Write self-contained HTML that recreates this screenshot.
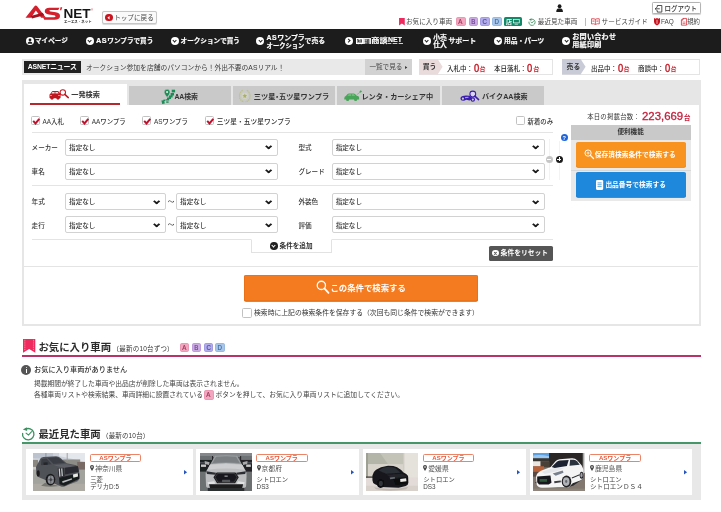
<!DOCTYPE html>
<html lang="ja">
<head>
<meta charset="utf-8">
<title>ASNET</title>
<style>
html,body{margin:0;padding:0;background:#fff;}
body{width:721px;height:512px;overflow:hidden;position:relative;font-family:"Liberation Sans","Noto Sans CJK JP",sans-serif;color:#333;}
#pg{will-change:transform;position:absolute;left:0;top:0;width:721px;height:512px;overflow:hidden;background:#fff;}
.a{position:absolute;}
.t{position:absolute;white-space:nowrap;line-height:10px;font-size:6.6px;color:#333;}
.b{font-weight:700;}
.w{color:#fff;}
svg{position:absolute;overflow:visible;}
/* nav */
#nav{left:0;top:28.5px;width:721px;height:24.5px;background:#1c1c1c;}
.nv{font-size:6.6px;font-weight:700;color:#fff;line-height:8px;-webkit-text-stroke:0.18px #fff;}
.ni{position:absolute;width:8px;height:8px;border-radius:50%;background:#fff;}
.ni:after{content:"";position:absolute;left:2.4px;top:1.9px;width:2.2px;height:2.2px;border-right:1.1px solid #1c1c1c;border-bottom:1.1px solid #1c1c1c;transform:rotate(45deg);}
.ni.r:after{left:1.9px;top:2.4px;transform:rotate(-45deg);}
/* selects */
.sel{position:absolute;height:17px;box-sizing:border-box;border:0.8px solid #d2d2d2;border-radius:2px;background:#fff;}
.sel span{position:absolute;left:2.7px;top:3.5px;font-size:6.6px;line-height:9px;color:#333;white-space:nowrap;font-weight:500;}
.sel i{position:absolute;right:5.7px;top:4.9px;width:3.3px;height:3.3px;border-right:2px solid #1a1a1a;border-bottom:2px solid #1a1a1a;transform:scaleY(0.8) rotate(45deg);}
.lb{font-size:6.6px;color:#333;font-weight:500;}
.hr{position:absolute;height:0.8px;background:#e4e4e4;}
/* checkbox */
.cb{position:absolute;width:9.1px;height:9.1px;box-sizing:border-box;border:0.8px solid #c2c2c2;border-radius:1.6px;background:#fff;}
.cb svg{left:0;top:0;}
.bd{position:absolute;width:9.4px;height:9.2px;border-radius:1.8px;font-size:7.2px;line-height:8.6px;text-align:center;box-sizing:border-box;}
.bd span{display:inline-block;transform:scaleX(0.85);-webkit-text-stroke:0.2px currentColor;}
.bA{background:#f3a6c0;color:#963452;border:0.5px solid #eb98b4;}
.bB{background:#cbaae2;color:#6c4290;border:0.5px solid #be9cda;}
.bC{background:#b2aceb;color:#504a9c;border:0.5px solid #a49ce2;}
.bD{background:#a8c6ea;color:#3c689c;border:0.5px solid #98bae0;}
</style>
</head>
<body>
<div id="pg">
<svg width="0" height="0" style="left:0;top:0"><defs><filter id="bl" x="-5%" y="-5%" width="110%" height="110%"><feGaussianBlur stdDeviation="0.35"/></filter></defs></svg>

<!-- ===== header ===== -->
<svg class="a" style="left:23px;top:4px" width="72" height="22" viewBox="0 0 72 22">
  <g transform="translate(-5 -4) scale(0.125)">
  <path d="M60 141 L132 49 Q142 37 153 49 L224 141 L186 141 L143 84 L104 141 Z" fill="#d3202c"/>
  <path d="M100 127 L198 102 L210 121 L112 147 Z" fill="#a5121d"/>
  <path d="M332 62 L252 62 Q214 62 214 90 Q214 111 246 115 L290 121 Q300 123 300 130 Q300 137 288 137 L200 137 L210 158 L292 158 Q336 158 336 128 Q336 103 302 98 L262 92 Q251 90 251 84 Q251 79 262 79 L322 79 Z" fill="#d3202c"/>
  <path d="M340 58 L354 58 L346 82 L336 82 Z" fill="#d3202c"/>
  </g>
  <text x="40.4" y="13.7" font-family="Liberation Sans,sans-serif" font-weight="700" font-size="12.4" fill="#161616" textLength="27.2" lengthAdjust="spacingAndGlyphs">NET</text>
  <text x="68" y="7" font-family="Liberation Sans,sans-serif" font-size="2.6" fill="#d3202c">®</text>
  <text x="41" y="19.2" font-family="Liberation Sans,Noto Sans CJK JP,sans-serif" font-weight="700" font-size="3.4" fill="#222" textLength="27.6" lengthAdjust="spacingAndGlyphs">エーエス・ネット</text>
</svg>

<div class="a" style="left:102.3px;top:11px;width:54.4px;height:12.8px;box-sizing:border-box;border:0.8px solid #c6c6c6;border-radius:2px;background:#fafafa;box-shadow:0 0.5px 0.8px rgba(0,0,0,.15)"></div>
<div class="a" style="left:105.2px;top:13.8px;width:7.4px;height:7.4px;border-radius:50%;background:#c8141e"></div>
<svg class="a" style="left:105.2px;top:13.8px" width="7.4" height="7.4" viewBox="0 0 10 10"><path d="M6.2 2.6 L3.2 5 L6.2 7.4 Z" fill="#fff"/></svg>
<div class="t" style="left:114.2px;top:12.6px;font-size:6.6px;color:#444">トップに戻る</div>

<!-- user icon -->
<svg class="a" style="left:556.3px;top:3.7px" width="7.2" height="8.2" viewBox="0 0 16 17" preserveAspectRatio="none"><circle cx="8" cy="4.6" r="4.2" fill="#1a1a1a"/><path d="M0.6 16.6 Q0.6 9.6 5.4 9.2 L10.6 9.2 Q15.4 9.6 15.4 16.6 Z" fill="#1a1a1a"/></svg>

<!-- logout -->
<div class="a" style="left:651.6px;top:2.4px;width:49px;height:11.6px;box-sizing:border-box;border:0.8px solid #b4b4b4;border-radius:1.5px;background:#fff;box-shadow:0 0.5px 0.8px rgba(0,0,0,.18)"></div>
<svg class="a" style="left:654px;top:4.5px" width="8.6" height="7.6" viewBox="0 0 16 15"><path d="M6 1 H15 V14 H6 V10.6 M6 4.4 V1" fill="none" stroke="#333" stroke-width="1.7"/><path d="M11 7.5 H2 M5 4.4 L1.8 7.5 L5 10.6" fill="none" stroke="#333" stroke-width="1.7"/></svg>
<div class="t" style="left:664.6px;top:3.6px;font-size:6.5px;font-weight:500;color:#333">ログアウト</div>

<!-- link row -->
<svg class="a" style="left:399.4px;top:18px" width="5.8" height="7.6" viewBox="0 0 12 16"><path d="M0 0 H12 V16 L6 11.5 L0 16 Z" fill="#ee2a5e"/></svg>
<div class="t" style="left:406px;top:17.4px;font-size:6.6px;color:#444">お気に入り車両</div>
<div class="bd bA" style="left:456.2px;top:16.8px"><span>A</span></div>
<div class="bd bB" style="left:468.6px;top:16.8px"><span>B</span></div>
<div class="bd bC" style="left:480.4px;top:16.8px"><span>C</span></div>
<div class="bd bD" style="left:492.4px;top:16.8px"><span>D</span></div>
<div class="a" style="left:504.2px;top:17.4px;width:17.8px;height:8.6px;border-radius:1.6px;background:#14896a"></div>
<div class="t w b" style="left:506px;top:16.8px;font-size:6px">店</div>
<svg class="a" style="left:513.4px;top:19px" width="6.6" height="5.6" viewBox="0 0 12 10"><rect x="0.6" y="0.6" width="10.8" height="6.4" fill="none" stroke="#fff" stroke-width="1.2"/><path d="M3 9.4 H9" stroke="#fff" stroke-width="1.2"/></svg>

<svg class="a" style="left:528.2px;top:17.6px" width="8" height="8" viewBox="0 0 8 8"><path d="M2.36 1.67 A3.1 3.1 0 1 1 0.97 3.66" fill="none" stroke="#3a9060" stroke-width="0.85"/><path d="M3.36 0.37 L0.86 1.77 L3.46 2.67 Z" fill="#3a9060"/><path d="M2.6 3.9 L4 5 L5.7 3" fill="none" stroke="#3a9060" stroke-width="0.8"/></svg>
<div class="t" style="left:537.8px;top:17.4px;font-size:6.6px;color:#444">最近見た車両</div>
<div class="a" style="left:584.6px;top:18px;width:0.7px;height:8.4px;background:#bbb"></div>
<svg class="a" style="left:591px;top:18.2px" width="8.8" height="7" viewBox="0 0 18 14"><path d="M9 2.4 Q5 0.2 1 1.4 V12 Q5 10.8 9 13 Q13 10.8 17 12 V1.4 Q13 0.2 9 2.4 Z M9 2.4 V13" fill="none" stroke="#d3202c" stroke-width="1.4"/><path d="M3 4.4 H7 M3 7 H7 M11 4.4 H15 M11 7 H15" stroke="#d3202c" stroke-width="1"/></svg>
<div class="t" style="left:601.6px;top:17.4px;font-size:6.6px;color:#444">サービスガイド</div>
<svg class="a" style="left:654px;top:18px" width="6" height="7.6" viewBox="0 0 12 15"><path d="M0 0 L3 1.6 L6 0 L9 1.6 L12 0 V8 Q12 12.6 6 15 Q0 12.6 0 8 Z" fill="#c8121e"/><path d="M6 3.4 V11.6" stroke="#fff" stroke-width="1.4"/></svg>
<div class="t" style="left:661px;top:17.4px;font-size:6.4px;color:#444">FAQ</div>
<svg class="a" style="left:681px;top:18px" width="6" height="7.6" viewBox="0 0 12 15"><path d="M4 0.8 H11.2 V14.2 H0.8 V4 Z M4 0.8 V4 H0.8" fill="none" stroke="#d3202c" stroke-width="1.5"/><path d="M3 8 H9 M3 11 H9" stroke="#d3202c" stroke-width="1.2"/></svg>
<div class="t" style="left:687.2px;top:17.4px;font-size:6.4px;color:#444">規約</div>

<!-- ===== nav ===== -->
<div id="nav" class="a"></div>

<svg class="a" style="left:26px;top:36.8px" width="8" height="8" viewBox="0 0 16 16"><circle cx="8" cy="8" r="8" fill="#fff"/><circle cx="8" cy="6" r="2.8" fill="#1c1c1c"/><path d="M3.2 13.4 Q3.4 9.6 6.4 9.4 L9.6 9.4 Q12.6 9.6 12.8 13.4 Z" fill="#1c1c1c"/></svg>
<div class="t nv" style="left:35px;top:36.8px">マイページ</div>
<div class="ni" style="left:86px;top:36.8px"></div>
<div class="t nv" style="left:96px;top:36.8px"><span style="letter-spacing:0.6px;font-size:7.3px">AS</span>ワンプラで買う</div>
<div class="ni" style="left:170.8px;top:36.8px"></div>
<div class="t nv" style="left:180.6px;top:36.8px">オークションで買う</div>
<div class="ni" style="left:256.3px;top:37.1px"></div>
<div class="t nv" style="left:266.6px;top:33.7px;line-height:8px;font-size:6.3px"><span style="font-size:6.95px"><span style="letter-spacing:0.5px">AS</span>ワンプラ</span><br>オークション</div>
<div class="t nv" style="left:304.6px;top:37.4px;font-size:6.9px">で売る</div>
<div class="ni r" style="left:345.2px;top:36.8px"></div>
<div class="a" style="left:356px;top:37.5px;width:7.3px;height:6.8px;box-sizing:border-box;border:0.75px solid #fff"></div>
<div class="t" style="left:357.1px;top:36px;font-size:5.1px;font-weight:700;color:#fff">店</div>
<div class="a" style="left:363.3px;top:37.5px;width:7.3px;height:6.8px;background:#e8e8e8"></div>
<div class="t" style="left:364.4px;top:36px;font-size:5.1px;font-weight:700;color:#1c1c1c">頭</div>
<div class="t nv" style="left:371.2px;top:36.9px;font-size:8.2px;transform:scaleY(0.8);transform-origin:0 50%">商談</div>
<div class="t nv" style="left:388px;top:36.2px;font-size:6.9px;letter-spacing:0.1px">NET</div>
<div class="a" style="left:388.2px;top:43.3px;width:15.2px;height:0.9px;background:repeating-linear-gradient(90deg,#cfcfcf 0 0.7px,#555 0.7px 1.2px)"></div>
<div class="ni" style="left:423px;top:36.8px"></div>
<div class="t nv" style="left:433.2px;top:33.6px;line-height:7.5px;font-size:6.8px">小売<br>仕入</div>
<div class="t nv" style="left:448.4px;top:36.6px;font-size:6.95px">サポート</div>
<div class="ni" style="left:494.2px;top:36.8px"></div>
<div class="t nv" style="left:504px;top:36.8px;font-size:6.75px">用品・パーツ</div>
<div class="ni" style="left:562.2px;top:36.8px"></div>
<div class="t nv" style="left:572.2px;top:33.2px;line-height:8.2px;font-size:7.05px;letter-spacing:0.3px">お問い合わせ<br>用紙印刷</div>



<!-- ===== news bar ===== -->
<div class="a" style="left:22px;top:59.2px;width:390px;height:15.6px;background:#e9e9e9"></div>
<div class="a" style="left:24.2px;top:61.2px;width:57px;height:11.4px;background:#222"></div>
<div class="t w b" style="left:27.8px;top:62.2px;font-size:6.9px;letter-spacing:-0.2px">ASNETニュース</div>
<div class="t" style="left:86px;top:63px;font-size:6.78px;color:#3a3a3a">オークション参加を店舗のパソコンから！外出不要のASリアル！</div>
<div class="a" style="left:365.4px;top:59.2px;width:46.6px;height:15.6px;background:#d2d2d2"></div>
<div class="t" style="left:369.4px;top:62.2px;font-size:6.6px;color:#444">一覧で見る</div>
<svg class="a" style="left:405px;top:65.6px" width="2.4" height="3" viewBox="0 0 6 8"><path d="M0 0 L6 4 L0 8 Z" fill="#333"/></svg>

<div class="a" style="left:418.6px;top:59.2px;width:134px;height:15.6px;box-sizing:border-box;border:0.8px solid #e4e4e4;background:#fff"></div>
<svg class="a" style="left:418.6px;top:59.2px" width="24" height="15.6" viewBox="0 0 24 15.6"><path d="M0 0 H18.6 L23.6 7.8 L18.6 15.6 H0 Z" fill="#e9dadc"/></svg>
<div class="t b" style="left:422.8px;top:62px;font-size:6.8px;color:#333">買う</div>
<div class="t" style="left:447px;top:63.6px;font-size:6.5px;font-weight:500;color:#222">入札中：</div>
<div class="t" style="left:473.6px;top:61.7px;font-size:11.2px;color:#c8202c;line-height:12px;transform:scaleX(0.84);transform-origin:0 0;-webkit-text-stroke:0.45px #c8202c">0</div>
<div class="t" style="left:479.4px;top:63.9px;font-size:6px;font-weight:700;color:#c8202c">台</div>
<div class="t" style="left:494px;top:63.6px;font-size:6.5px;font-weight:500;color:#222">本日落札：</div>
<div class="t" style="left:527.4px;top:61.7px;font-size:11.2px;color:#c8202c;line-height:12px;transform:scaleX(0.84);transform-origin:0 0;-webkit-text-stroke:0.45px #c8202c">0</div>
<div class="t" style="left:533.2px;top:63.9px;font-size:6px;font-weight:700;color:#c8202c">台</div>

<div class="a" style="left:562.2px;top:59.2px;width:138.2px;height:15.6px;box-sizing:border-box;border:0.8px solid #e4e4e4;background:#fff"></div>
<svg class="a" style="left:562.2px;top:59.2px" width="24" height="15.6" viewBox="0 0 24 15.6"><path d="M0 0 H18.6 L23.6 7.8 L18.6 15.6 H0 Z" fill="#c9ccd6"/></svg>
<div class="t b" style="left:566.6px;top:62px;font-size:6.8px;color:#333">売る</div>
<div class="t" style="left:591px;top:63.6px;font-size:6.5px;font-weight:500;color:#222">出品中：</div>
<div class="t" style="left:617.6px;top:61.7px;font-size:11.2px;color:#c8202c;line-height:12px;transform:scaleX(0.84);transform-origin:0 0;-webkit-text-stroke:0.45px #c8202c">0</div>
<div class="t" style="left:623.4px;top:63.9px;font-size:6px;font-weight:700;color:#c8202c">台</div>
<div class="t" style="left:638px;top:63.6px;font-size:6.5px;font-weight:500;color:#222">商談中：</div>
<div class="t" style="left:664.6px;top:61.7px;font-size:11.2px;color:#c8202c;line-height:12px;transform:scaleX(0.84);transform-origin:0 0;-webkit-text-stroke:0.45px #c8202c">0</div>
<div class="t" style="left:670.4px;top:63.9px;font-size:6px;font-weight:700;color:#c8202c">台</div>


<!-- ===== tabs ===== -->
<div class="a" style="left:21.8px;top:80.1px;width:679px;height:24.9px;background:#e6e6e6"></div>
<div class="a" style="left:24.2px;top:83.5px;width:103.2px;height:22px;background:#fff"></div>
<div class="a" style="left:30.4px;top:102.9px;width:89.6px;height:2px;background:#b4282e"></div>
<div class="a" style="left:129.2px;top:86.4px;width:101.6px;height:18.2px;background:#c9c9c9"></div>
<div class="a" style="left:233px;top:86.4px;width:102px;height:18.2px;background:#c9c9c9"></div>
<div class="a" style="left:337.2px;top:86.4px;width:102.4px;height:18.2px;background:#c9c9c9"></div>
<div class="a" style="left:442.4px;top:86.4px;width:102px;height:18.2px;background:#c9c9c9"></div>

<!-- tab1 icon: red car + magnifier -->
<svg class="a" style="left:49px;top:89px" width="21" height="12" viewBox="0 0 21 12">
  <path d="M0.5 8.6 V6.2 Q0.5 5 1.6 4.6 L2.6 2.9 Q3 2.1 4 2.1 H8.6 Q9.5 2.1 10 2.9 L11 4.6 Q11.6 5 11.6 6.2 V8.6 Q11.6 9.2 11 9.2 H1.1 Q0.5 9.2 0.5 8.6 Z" fill="#c0161e"/>
  <path d="M3.3 3.1 H5.6 V4.6 H2.5 Z M6.4 3.1 H8.8 L9.6 4.6 H6.4 Z" fill="#fff" opacity=".85"/>
  <circle cx="3" cy="9.2" r="1.45" fill="#c0161e"/><circle cx="9" cy="9.2" r="1.45" fill="#c0161e"/>
  <rect x="1.2" y="6" width="1.6" height="0.9" fill="#fff" opacity=".7"/><rect x="9.2" y="6" width="1.6" height="0.9" fill="#fff" opacity=".7"/>
  <circle cx="13.8" cy="3.4" r="2.7" fill="#fff" stroke="#c0161e" stroke-width="1.05"/>
  <path d="M15.8 5.4 L19.3 8.6" stroke="#c0161e" stroke-width="1.5" stroke-linecap="round"/>
</svg>
<div class="t b" style="left:71.2px;top:90px;font-size:7.2px;color:#333">一発検索</div>

<!-- tab2 icon: green map -->
<svg class="a" style="left:161px;top:89px" width="15" height="15.4" viewBox="0 0 15 15.4">
  <path d="M10.7 0.7 H14.1 V3.4 H10.7 Z" fill="#1a8c56"/>
  <path d="M9.6 4 H13 V6.6 H11.6 V8.4 H10 V10 H8.2 V11.6 H4.6 V10.2 H6 V8.4 H7.8 V6.4 H9.6 Z" fill="#1a8c56"/>
  <path d="M2.4 10.6 H4.2 V12 H2.4 Z" fill="#1a8c56"/>
  <path d="M0.4 11.6 L3.2 11.2 L3.8 14.6 L1.2 15 Z" fill="#1a8c56"/>
  <path d="M5.2 12.4 H7.6 V13.8 H5.2 Z" fill="#1a8c56"/>
  <path d="M6.1 0.3 A2.9 2.9 0 0 1 9 3.2 Q9 5 6.1 8.4 Q3.2 5 3.2 3.2 A2.9 2.9 0 0 1 6.1 0.3 Z" fill="#1a8c56" stroke="#c9c9c9" stroke-width="0.5"/>
  <circle cx="6.1" cy="3.1" r="1.1" fill="#d8e8dc"/>
</svg>
<div class="t b" style="left:174.4px;top:91.8px;font-size:6.9px;color:#333;letter-spacing:-0.1px">AA検索</div>

<!-- tab3 icon: laurel + star -->
<svg class="a" style="left:238.2px;top:89.3px" width="13.6" height="13.6" viewBox="0 0 28 28">
  <path d="M9.6 2.6 Q1 8.6 4 19.6 Q6.6 25.4 12.6 26.2" fill="none" stroke="#bcc18c" stroke-width="2.6" stroke-dasharray="3 1.2"/>
  <path d="M18.4 2.6 Q27 8.6 24 19.6 Q21.4 25.4 15.4 26.2" fill="none" stroke="#bcc18c" stroke-width="2.6" stroke-dasharray="3 1.2"/>
  <circle cx="14" cy="14" r="6.4" fill="#d3d5c0"/>
  <path d="M14 9.4 L15.4 12.6 L18.8 12.9 L16.2 15.2 L17 18.6 L14 16.8 L11 18.6 L11.8 15.2 L9.2 12.9 L12.6 12.6 Z" fill="#a9b06c"/>
</svg>
<div class="t b" style="left:253.8px;top:91.6px;font-size:7.2px;color:#333">三ツ星<span style="margin:0 -1.8px">・</span>五ツ星ワンプラ</div>

<!-- tab4 icon: green car -->
<svg class="a" style="left:343.8px;top:89.6px" width="18" height="12" viewBox="0 0 18 12">
  <path d="M0.3 8.2 Q0.3 6.2 1.8 5.9 L3.6 4 Q4.1 3.5 5 3.5 H9.6 Q10.5 3.5 11 4 L12.8 5.7 L13.8 5.9 Q15.1 6.2 15.1 7.6 V9.4 H0.3 Z" fill="#48a458"/>
  <circle cx="3.6" cy="9.5" r="1.6" fill="#48a458"/><circle cx="11.6" cy="9.5" r="1.6" fill="#48a458"/>
  <path d="M4.8 4.3 H7 V5.7 H3.5 Z M7.8 4.3 H9.8 L11.2 5.7 H7.8 Z" fill="#8cc894" opacity=".8"/>
  <path d="M12.6 5 L16.4 1.8" stroke="#7cbc86" stroke-width="0.9"/>
  <path d="M16.8 0.2 L18 1.6 L16.6 2.8 L15.4 1.4 Z" fill="#48a458"/>
</svg>
<div class="t b" style="left:361.4px;top:91.6px;font-size:7.2px;color:#333">レンタ・カーシェア中</div>

<!-- tab5 icon: bike + magnifier -->
<svg class="a" style="left:460px;top:90px" width="20" height="12" viewBox="0 0 20 12">
  <path d="M0.4 9 Q0.2 6.6 2.6 6 L6 5.6 L9.6 5.8 L11.6 7 L11.8 9.4 L9.4 10.4 L6.4 9.8 L4 10.8 L1.6 10.6 Z" fill="#3a1cb0"/>
  <circle cx="2.9" cy="8.7" r="1.1" fill="#c9c9c9"/><path d="M5 7 L8.4 6.8 L8.6 7.8 L5.2 8.2 Z" fill="#c9c9c9" opacity=".8"/>
  <circle cx="12.8" cy="9.6" r="1.7" fill="none" stroke="#3a1cb0" stroke-width="1.1"/>
  <circle cx="12.8" cy="4" r="2.9" fill="#dcd6f2" stroke="#3a1cb0" stroke-width="1.05"/>
  <path d="M14.9 6.1 L18.6 9.6" stroke="#3a1cb0" stroke-width="1.5" stroke-linecap="round"/>
</svg>
<div class="t b" style="left:482px;top:91.6px;font-size:7.1px;color:#333">バイクAA検索</div>


<!-- ===== search panel ===== -->
<div class="a" style="left:21.8px;top:105px;width:679px;height:221.2px;box-sizing:border-box;border:2.3px solid #e6e6e6;border-top:none;background:transparent"></div>

<div class="cb on" style="left:31.3px;top:116.2px"><svg width="7.5" height="7.5" viewBox="0 0 7.5 7.5"><path d="M1.2 3.9 L3.5 6.4 L7.3 1.9" fill="none" stroke="#c0102c" stroke-width="2"/></svg></div><div class="t" style="left:42.6px;top:116.8px;font-size:6.4px;font-weight:500">AA入札</div>
<div class="cb on" style="left:79.9px;top:116.2px"><svg width="7.5" height="7.5" viewBox="0 0 7.5 7.5"><path d="M1.2 3.9 L3.5 6.4 L7.3 1.9" fill="none" stroke="#c0102c" stroke-width="2"/></svg></div><div class="t" style="left:91.8px;top:116.8px;font-size:6.4px;font-weight:500">AAワンプラ</div>
<div class="cb on" style="left:142.3px;top:116.2px"><svg width="7.5" height="7.5" viewBox="0 0 7.5 7.5"><path d="M1.2 3.9 L3.5 6.4 L7.3 1.9" fill="none" stroke="#c0102c" stroke-width="2"/></svg></div><div class="t" style="left:154px;top:116.8px;font-size:6.4px;font-weight:500">ASワンプラ</div>
<div class="cb on" style="left:205.1px;top:116.2px"><svg width="7.5" height="7.5" viewBox="0 0 7.5 7.5"><path d="M1.2 3.9 L3.5 6.4 L7.3 1.9" fill="none" stroke="#c0102c" stroke-width="2"/></svg></div><div class="t" style="left:216.8px;top:116.8px;font-size:6.75px;font-weight:500">三ツ星・五ツ星ワンプラ</div>
<div class="cb" style="left:516.3px;top:116.2px"></div><div class="t" style="left:527.6px;top:116.8px;font-size:6.4px;font-weight:500">新着のみ</div>

<div class="hr" style="left:31.6px;top:132.2px;width:521px"></div>

<div class="t lb" style="left:31.6px;top:142.9px">メーカー</div>
<div class="sel" style="left:65.4px;top:138.6px;width:212.4px"><span>指定なし</span><i></i></div>
<div class="t lb" style="left:298.4px;top:142.9px">型式</div>
<div class="sel" style="left:332px;top:138.6px;width:213.4px"><span>指定なし</span><i></i></div>

<div class="t lb" style="left:31.6px;top:167.2px">車名</div>
<div class="sel" style="left:65.4px;top:162.6px;width:212.4px"><span>指定なし</span><i></i></div>
<div class="t lb" style="left:298.4px;top:167.2px">グレード</div>
<div class="sel" style="left:332px;top:162.6px;width:213.4px"><span>指定なし</span><i></i></div>

<div class="hr" style="left:31.6px;top:185.4px;width:521px"></div>

<div class="t lb" style="left:31.6px;top:196.6px">年式</div>
<div class="sel" style="left:65.4px;top:192.7px;width:100.6px"><span>指定なし</span><i></i></div>
<div class="t" style="left:167.8px;top:196.6px;font-size:6.6px">～</div>
<div class="sel" style="left:176.4px;top:192.7px;width:101.4px"><span>指定なし</span><i></i></div>
<div class="t lb" style="left:298.4px;top:196.6px">外装色</div>
<div class="sel" style="left:332px;top:192.7px;width:213.4px"><span>指定なし</span><i></i></div>

<div class="t lb" style="left:31.6px;top:220.5px">走行</div>
<div class="sel" style="left:65.4px;top:216.2px;width:100.6px"><span>指定なし</span><i></i></div>
<div class="t" style="left:167.8px;top:220.2px;font-size:6.6px">～</div>
<div class="sel" style="left:176.4px;top:216.2px;width:101.4px"><span>指定なし</span><i></i></div>
<div class="t lb" style="left:298.4px;top:220.5px">評価</div>
<div class="sel" style="left:332px;top:216.2px;width:213.4px"><span>指定なし</span><i></i></div>

<div class="hr" style="left:31.6px;top:239px;width:521px"></div>
<div class="a" style="left:251.4px;top:239px;width:81px;height:14.4px;box-sizing:border-box;border:0.8px solid #e2e2e2;border-top:0.8px solid #fff;background:#fff"></div>
<div class="a" style="left:270px;top:242.3px;width:7.6px;height:7.6px;border-radius:50%;background:#222"></div>
<div class="a" style="left:272.4px;top:243.9px;width:2px;height:2px;border-right:1.1px solid #fff;border-bottom:1.1px solid #fff;transform:rotate(45deg)"></div>
<div class="t b" style="left:279.6px;top:241.2px;font-size:6.6px;color:#333">条件を追加</div>

<div class="a" style="left:488.8px;top:245.6px;width:64px;height:15px;border-radius:1.6px;background:#555"></div>
<div class="a" style="left:492.4px;top:249.6px;width:6.8px;height:6.8px;border-radius:50%;background:#fff"></div>
<svg class="a" style="left:492.4px;top:249.6px" width="6.8" height="6.8" viewBox="0 0 10 10"><path d="M3.2 3.2 L6.8 6.8 M6.8 3.2 L3.2 6.8" stroke="#555" stroke-width="1.5"/></svg>
<div class="t w b" style="left:500.6px;top:248.2px;font-size:6.8px">条件をリセット</div>

<div class="hr" style="left:24.2px;top:265.8px;width:674px"></div>

<div class="a" style="left:243.8px;top:274.6px;width:234.4px;height:26.4px;border-radius:2px;background:#f47b20;box-shadow:0 0.8px 0 #cc5c10, inset 0 0 0 0.6px #e26c14"></div>
<svg class="a" style="left:315.8px;top:279.8px" width="13.4" height="14" viewBox="0 0 24 25"><circle cx="9.6" cy="9.6" r="7.4" fill="none" stroke="#fff" stroke-width="2.3"/><path d="M15 15 L22.4 23" stroke="#fff" stroke-width="3.2" stroke-linecap="round"/></svg>
<div class="t w b" style="left:330.4px;top:283px;font-size:8.4px;line-height:11px">この条件で検索する</div>

<div class="cb" style="left:242.4px;top:308.1px;width:9.6px;height:9.6px"></div>
<div class="t" style="left:254px;top:307.6px;font-size:6.82px;color:#333">検索時に上記の検索条件を保存する（次回も同じ条件で検索ができます）</div>


<!-- ===== side ===== -->
<div class="t" style="left:587.2px;top:112.4px;font-size:6.4px;color:#333;letter-spacing:0.2px">本日の掲載台数：</div>
<div class="t" style="left:642px;top:108.6px;font-size:11.4px;line-height:15px;color:#c4203c;-webkit-text-stroke:0.3px #c4203c">223,669</div>
<div class="t b" style="left:683.8px;top:112.8px;font-size:6.7px;color:#c4203c">台</div>

<div class="a" style="left:571px;top:125px;width:119.6px;height:75.6px;background:#e9e9e9"></div>
<div class="a" style="left:571px;top:125px;width:119.6px;height:14.6px;background:#c9c9c9"></div>
<div class="t b" style="left:617.4px;top:127.4px;font-size:6.6px;color:#333">便利機能</div>
<div class="a" style="left:571px;top:169.6px;width:119.6px;height:0.7px;background:#d8d8d8"></div>
<div class="a" style="left:576px;top:142px;width:109.6px;height:25.2px;border-radius:2px;background:#f7931e;box-shadow:0 0.8px 0 #d47a10"></div>
<svg class="a" style="left:584px;top:149px" width="10.4" height="10.4" viewBox="0 0 24 24"><circle cx="9.4" cy="9.4" r="7.2" fill="none" stroke="#fff" stroke-width="2.2"/><path d="M9.4 6 V12.8 M6 9.4 H12.8" stroke="#fff" stroke-width="1.8"/><path d="M14.8 14.8 L22 22" stroke="#fff" stroke-width="3" stroke-linecap="round"/></svg>
<div class="t w b" style="left:594.8px;top:149.8px;font-size:6.76px">保存済検索条件で検索する</div>
<div class="a" style="left:576px;top:172px;width:109.6px;height:25.4px;border-radius:2px;background:#1e88dc;box-shadow:0 0.8px 0 #1668b0"></div>
<svg class="a" style="left:596px;top:179.8px" width="7.2" height="10" viewBox="0 0 14 19"><rect x="0" y="0" width="14" height="19" rx="2.2" fill="#fff"/><path d="M3 5.4 H11 M3 9 H11 M3 12.6 H11" stroke="#1e88dc" stroke-width="1.4"/></svg>
<div class="t w b" style="left:605.4px;top:180.2px;font-size:6.72px">出品番号で検索する</div>

<div class="a" style="left:549.3px;top:139px;width:0.7px;height:41px;background:#f3f3f3"></div>
<div class="a" style="left:559px;top:141px;width:0.7px;height:39px;background:#f3f3f3"></div>
<div class="a" style="left:560.6px;top:134px;width:7.4px;height:7.4px;border-radius:50%;background:#1e64dc"></div>
<div class="t w b" style="left:562.4px;top:132.7px;font-size:5.6px">?</div>
<div class="a" style="left:545.5px;top:155.5px;width:7.4px;height:7.4px;border-radius:50%;background:#c6c6c6"></div>
<div class="a" style="left:547.3px;top:158.7px;width:3.8px;height:1px;background:#fff"></div>
<div class="a" style="left:555.5px;top:155.5px;width:7.5px;height:7.5px;border-radius:50%;background:#1e1e1e"></div>
<div class="a" style="left:557.25px;top:158.7px;width:4px;height:1.1px;background:#fff"></div>
<div class="a" style="left:558.7px;top:157.25px;width:1.1px;height:4px;background:#fff"></div>


<!-- ===== favorites ===== -->
<svg class="a" style="left:22.7px;top:339.4px" width="12.3" height="13.9" viewBox="0 0 24 27"><path d="M0 0 H24 V27 L12 19.4 L0 27 Z" fill="#ee2a5e"/><path d="M3.6 1.5 V22.5 M20.4 1.5 V22.5" stroke="#fbb" stroke-width="1.3" stroke-dasharray="2 1.6"/></svg>
<div class="t b" style="left:38.4px;top:340.6px;font-size:10.4px;line-height:14px;color:#2c2c2c">お気に入り車両</div>
<div class="t" style="left:112.6px;top:343.7px;font-size:6.5px;letter-spacing:0.2px;color:#333">（最新の10台ずつ）</div>
<div class="bd bA" style="left:179.8px;top:342.5px"><span>A</span></div>
<div class="bd bB" style="left:191.8px;top:342.5px"><span>B</span></div>
<div class="bd bC" style="left:203.6px;top:342.5px"><span>C</span></div>
<div class="bd bD" style="left:215.4px;top:342.5px"><span>D</span></div>
<div class="a" style="left:21.8px;top:354.8px;width:679px;height:2px;background:#b83468"></div>

<div class="a" style="left:21.2px;top:364.6px;width:10px;height:10px;border-radius:50%;background:#555"></div>
<div class="a" style="left:25.5px;top:366.6px;width:1.5px;height:1.5px;border-radius:50%;background:#fff"></div>
<div class="a" style="left:25.5px;top:368.8px;width:1.5px;height:3.8px;background:#fff"></div>
<div class="t" style="left:34px;top:364.6px;font-size:7.2px;font-weight:500;color:#333">お気に入り車両がありません</div>
<div class="t" style="left:34px;top:378.9px;font-size:6.78px;color:#444">掲載期間が終了した車両や出品店が削除した車両は表示されません。</div>
<div class="t" style="left:34px;top:390.2px;font-size:6.78px;color:#444">各種車両リストや検索結果、車両詳細に設置されている</div>
<div class="bd bA" style="left:204.2px;top:390.4px"><span>A</span></div>
<div class="t" style="left:215.6px;top:390.2px;font-size:6.77px;color:#444">ボタンを押して、お気に入り車両リストに追加してください。</div>


<!-- ===== recent ===== -->
<svg class="a" style="left:21px;top:426px" width="16" height="16" viewBox="0 0 16 16"><path d="M4.23 3.37 A5.7 5.7 0 1 1 1.67 7.01" fill="none" stroke="#3a9060" stroke-width="1.3"/><path d="M5.83 1.17 L1.83 3.47 L6.13 5.07 Z" fill="#3a9060"/><path d="M4.7 6.9 L7.5 9 L10.8 5.3" fill="none" stroke="#3a9060" stroke-width="1.1"/></svg>
<div class="t b" style="left:38.4px;top:427.9px;font-size:10.4px;line-height:14px;color:#2c2c2c">最近見た車両</div>
<div class="t" style="left:102px;top:430.8px;font-size:6.5px;letter-spacing:0.15px;color:#333">（最新の10台）</div>
<div class="a" style="left:21.8px;top:442.2px;width:679px;height:2.2px;background:#46966a"></div>
<div class="a" style="left:21.8px;top:444.4px;width:679px;height:55.8px;background:#e8e8e8"></div>

<div class="a" style="left:26.2px;top:449.2px;width:166.4px;height:46px;background:#fff"></div>
<svg class="a" style="left:33.2px;top:452.7px;overflow:hidden" width="52.2" height="38.7" viewBox="0 0 52 39" preserveAspectRatio="none"><g filter="url(#bl)"><rect width="52" height="39" fill="#a5a5a0"/>
<rect width="52" height="12" fill="#cdd2da"/><path d="M26 0 H52 V9 Q40 6 26 3 Z" fill="#e4e7ec"/><path d="M0 0 H20 V4 Q10 6 0 5 Z" fill="#bcc3cf"/>
<rect x="0" y="7" width="5" height="9" fill="#8a8680"/><rect x="0" y="14" width="4" height="3" fill="#c8c8c4"/>
<rect x="30" y="6.5" width="17" height="6.5" fill="#8e8c86"/><rect x="44" y="9" width="8" height="8" fill="#7a6a66"/><rect x="48" y="17" width="4" height="2.4" fill="#8a9a6a"/>
<rect x="12.6" y="0" width="0.6" height="5" fill="#777"/><rect x="33.6" y="0" width="0.9" height="8" fill="#999"/>
<path d="M0 17 H52 V39 H0 Z" fill="#a3a39d"/><path d="M0 31 H52 V39 H0 Z" fill="#adaba4"/>
<path d="M8 33 Q24 36 44 29 L46 27 L30 34 L12 30 Z" fill="#77766f"/>
<path d="M3 14 L7.4 5.6 Q8.4 4.2 10.4 4 L23 3.4 Q25.6 3.4 27.4 5 L33.6 10.4 L42 12 Q45.4 12.8 45.8 16 L46.4 24.4 Q46.4 27 44.4 28 L32 33.4 Q29.6 34.4 27 33.2 L7 25 Q3.6 23.6 3.2 20 Z" fill="#505259"/>
<path d="M14.6 5 L23 4.4 Q25 4.4 26.4 5.6 L32 10.2 L20.4 11.2 Z" fill="#3b3e45"/>
<path d="M8.4 6.4 L13.4 5.6 L18.6 11.4 L8 12.4 Z" fill="#3a3d44"/>
<path d="M10.4 9.6 L14.4 9.4 L14.8 11.8 L10.6 12.2 Z" fill="#25272c"/>
<path d="M20.6 12.4 L33 11.2 L42.6 13 L31.4 15 Z" fill="#5f6168"/>
<path d="M24.6 15.6 L31 14.8 L31.6 23.4 L25.4 24.6 Z" fill="#2c2e33"/>
<path d="M25.6 15.8 L26.8 15.7 L27.4 23.6 L26.2 23.9 Z M28 15.5 L29.2 15.3 L29.8 23.1 L28.6 23.4 Z" fill="#c9ccd0"/>
<path d="M31.6 14.8 L44.6 13.2 L45.6 19 L32 21.6 Z" fill="#2a2c31"/>
<path d="M26 25 L46 20.4 L46.2 26 L31.4 33 L26.4 31.4 Z" fill="#191a1d"/>
<path d="M29 28.6 L38.6 25.4 L39 26.8 L29.6 30.2 Z" fill="#b9bcc0"/>
<path d="M39.8 21.6 L44.6 20.4 L44.9 23.8 L40.2 25 Z" fill="#e9e9e6"/>
<ellipse cx="17.4" cy="26.8" rx="4.8" ry="6" fill="#1b1c1f"/><ellipse cx="17.7" cy="26.9" rx="3.2" ry="4.3" fill="#8d9197"/><ellipse cx="17.7" cy="26.9" rx="1.1" ry="1.5" fill="#3a3c40"/>
<path d="M14.6 27 H20.8 M17.7 22.8 V31" stroke="#44474c" stroke-width="0.6"/>
<ellipse cx="5.2" cy="20.6" rx="1.5" ry="3.2" fill="#1b1c1f"/></g></svg>
<div class="a" style="left:89.5px;top:454.4px;width:51.8px;height:7.8px;box-sizing:border-box;border:0.8px solid #ec8468;border-radius:1.6px;background:#fff"></div>
<div class="t b" style="left:89.5px;top:452.5px;width:51.8px;text-align:center;font-size:6px;color:#e0583c">ASワンプラ</div>
<svg class="a" style="left:90.2px;top:465.4px" width="4" height="6" viewBox="0 0 10 15"><path d="M5 0 A5 5 0 0 1 10 5 Q10 8 5 15 Q0 8 0 5 A5 5 0 0 1 5 0 Z" fill="#444"/><circle cx="5" cy="5" r="2" fill="#fff"/></svg>
<div class="t" style="left:95.2px;top:463.5px;font-size:6.8px;color:#555">神奈川県</div>
<div class="t" style="left:90.2px;top:475.2px;font-size:6.3px;color:#444">三菱</div>
<div class="t" style="left:90.2px;top:482.2px;font-size:6.3px;color:#444">デリカD:5</div>
<svg class="a" style="left:184.2px;top:470.1px" width="3.1" height="4.6" viewBox="0 0 6 9"><path d="M0 0 L6 4.5 L0 9 Z" fill="#2455c0"/></svg>
<div class="a" style="left:196.3px;top:449.2px;width:162.6px;height:46px;background:#fff"></div>
<svg class="a" style="left:199.6px;top:452.7px;overflow:hidden" width="52.2" height="38.7" viewBox="0 0 52 39" preserveAspectRatio="none"><g filter="url(#bl)"><rect width="52" height="39" fill="#55585a"/>
<rect x="0" y="0" width="52" height="4" fill="#84888a"/>
<path d="M0 3 H13 V19 H0 Z" fill="#1f2124"/><path d="M40 3 H52 V19 H40 Z" fill="#222427"/>
<rect x="0" y="3" width="12" height="4" fill="#6a6e70"/><rect x="41" y="3" width="11" height="4" fill="#6e7274"/>
<rect x="1" y="11.6" width="5" height="2.4" fill="#c8c8c8"/><rect x="46" y="11.6" width="4.6" height="2.4" fill="#c8c8c8"/>
<rect x="0" y="9" width="9" height="1.6" fill="#4a4e52"/><rect x="43" y="9" width="9" height="1.6" fill="#4a4e52"/>
<path d="M0 19 H52 V39 H0 Z" fill="#5f6264"/><path d="M0 19 H7 V39 H0 Z" fill="#6c6f71"/><path d="M45 19 H52 V39 H45 Z" fill="#6c6f71"/>
<path d="M15 2.8 Q26 1.8 37 2.8 L41.6 11 Q26 9.4 10.4 11 Z" fill="#9a9ea0"/>
<path d="M16 3.8 Q26 3 36 3.8 L39.6 10.2 Q26 8.8 12.4 10.2 Z" fill="#7b7f82"/>
<path d="M10.4 11 Q26 9.2 41.6 11 L45.4 17.6 Q46.6 19.6 46.4 23 L46 32.4 Q46 35 43.6 35 L8.4 35 Q6 35 6 32.4 L5.6 23 Q5.4 19.6 6.6 17.6 Z" fill="#bdbebf"/>
<path d="M9.6 12.2 Q26 10.2 42.4 12.2 L44.4 16.8 Q26 14.4 7.6 16.8 Z" fill="#cdcecf"/>
<path d="M6.2 18.4 L16 20 L15.2 21.8 L7 21.2 Z" fill="#2b2d30"/><path d="M45.8 18.4 L36 20 L36.8 21.8 L45 21.2 Z" fill="#2b2d30"/>
<path d="M16.6 19.6 H35.4 L38.6 24.4 L35 30.4 H17 L13.4 24.4 Z" fill="#17181a"/>
<path d="M17.6 20.6 H34.4 L37 24.4 L34.2 29.4 H17.8 L15 24.4 Z" fill="none" stroke="#6e7073" stroke-width="0.4"/>
<rect x="22" y="27" width="8" height="2.4" fill="#55585a"/><rect x="24.4" y="22.6" width="3.2" height="1.6" fill="#7a7c80"/>
<path d="M7.4 29.4 L14 28.6 L15.4 31 L8 31.4 Z" fill="#e1e2e3"/><path d="M44.6 29.4 L38 28.6 L36.6 31 L44 31.4 Z" fill="#e1e2e3"/>
<path d="M9 31.6 H43 L42 35.4 H10 Z" fill="#1c1d1f"/>
<path d="M8 35.4 H44 V39 H8 Z" fill="#2c2d2f"/>
<path d="M4.6 8 L9.6 9.4 L9 12 L5 11 Z" fill="#a8aaac"/><path d="M47.4 8 L42.4 9.4 L43 12 L47 11 Z" fill="#a8aaac"/></g></svg>
<div class="a" style="left:255.8px;top:454.4px;width:51.8px;height:7.8px;box-sizing:border-box;border:0.8px solid #ec8468;border-radius:1.6px;background:#fff"></div>
<div class="t b" style="left:255.8px;top:452.5px;width:51.8px;text-align:center;font-size:6px;color:#e0583c">ASワンプラ</div>
<svg class="a" style="left:256.6px;top:465.4px" width="4" height="6" viewBox="0 0 10 15"><path d="M5 0 A5 5 0 0 1 10 5 Q10 8 5 15 Q0 8 0 5 A5 5 0 0 1 5 0 Z" fill="#444"/><circle cx="5" cy="5" r="2" fill="#fff"/></svg>
<div class="t" style="left:261.6px;top:463.5px;font-size:6.8px;color:#555">京都府</div>
<div class="t" style="left:256.6px;top:475.2px;font-size:6.3px;color:#444">シトロエン</div>
<div class="t" style="left:256.6px;top:482.2px;font-size:6.3px;color:#444">DS3</div>
<svg class="a" style="left:350.6px;top:470.1px" width="3.1" height="4.6" viewBox="0 0 6 9"><path d="M0 0 L6 4.5 L0 9 Z" fill="#2455c0"/></svg>
<div class="a" style="left:363.0px;top:449.2px;width:162.6px;height:46px;background:#fff"></div>
<svg class="a" style="left:366.3px;top:452.7px;overflow:hidden" width="52.2" height="38.7" viewBox="0 0 52 39" preserveAspectRatio="none"><g filter="url(#bl)"><rect width="52" height="39" fill="#dcd8d1"/>
<rect x="0" y="0" width="37" height="11.4" fill="#b3b5a8"/><path d="M14 0 H37 V11.4 H22 Z" fill="#c4c3b8"/><rect x="0" y="0" width="2" height="26" fill="#9ea093"/>
<rect x="2" y="11.4" width="36" height="13" fill="#d8d4cc"/>
<rect x="38" y="0" width="14" height="30" fill="#e5e1db"/><rect x="37.4" y="0" width="0.7" height="28" fill="#c9c5bd"/>
<path d="M0 24.6 H52 V39 H0 Z" fill="#e2dbd7"/><path d="M0 33 H52 V39 H0 Z" fill="#d8d0cb"/>
<rect x="0" y="23.6" width="8" height="1.4" fill="#4a4640"/>
<path d="M6.4 22.6 Q7 19 10 16.8 Q14.6 13.4 20.6 13 Q27.6 12.8 31 14.4 Q35 16.8 37.4 19.6 Q41.6 21.4 42 24 L42.2 30 Q42.2 32.4 39.6 33.2 L32.6 35 L15 34.4 L9 31.4 Q6.4 30 6.4 27.4 Z" fill="#17181c"/>
<path d="M12.6 17.6 Q16.6 14.4 21 14.2 Q27 14 29.6 15.4 L34.4 19.8 L20 20.8 Z" fill="#2b2e35"/>
<path d="M20.6 22 L35.6 21 L41 23.6 L26.6 25.4 Z" fill="#23252b"/>
<path d="M27 26.4 L41.4 24.6 L41.4 30.8 L29.6 32.6 Z" fill="#0c0d0f"/>
<path d="M23.6 24.8 L28.6 24.2 L29 25.6 L24.2 26.4 Z" fill="#6a6e76"/>
<path d="M34 26.2 L40 25.4 L40.3 28.4 L34.3 29.2 Z" fill="#ecebe8"/>
<ellipse cx="14.6" cy="30.8" rx="3.6" ry="4.4" fill="#0a0a0c"/><ellipse cx="14.8" cy="30.8" rx="2" ry="2.8" fill="#33353b"/>
<path d="M8 34.6 Q24 38 42 34.2 L40 36.6 Q24 39.4 10 36.6 Z" fill="#bfb7b1"/></g></svg>
<div class="a" style="left:422.5px;top:454.4px;width:51.8px;height:7.8px;box-sizing:border-box;border:0.8px solid #ec8468;border-radius:1.6px;background:#fff"></div>
<div class="t b" style="left:422.5px;top:452.5px;width:51.8px;text-align:center;font-size:6px;color:#e0583c">ASワンプラ</div>
<svg class="a" style="left:423.3px;top:465.4px" width="4" height="6" viewBox="0 0 10 15"><path d="M5 0 A5 5 0 0 1 10 5 Q10 8 5 15 Q0 8 0 5 A5 5 0 0 1 5 0 Z" fill="#444"/><circle cx="5" cy="5" r="2" fill="#fff"/></svg>
<div class="t" style="left:428.3px;top:463.5px;font-size:6.8px;color:#555">愛媛県</div>
<div class="t" style="left:423.3px;top:475.2px;font-size:6.3px;color:#444">シトロエン</div>
<div class="t" style="left:423.3px;top:482.2px;font-size:6.3px;color:#444">DS3</div>
<svg class="a" style="left:517.3px;top:470.1px" width="3.1" height="4.6" viewBox="0 0 6 9"><path d="M0 0 L6 4.5 L0 9 Z" fill="#2455c0"/></svg>
<div class="a" style="left:529.7px;top:449.2px;width:162.6px;height:46px;background:#fff"></div>
<svg class="a" style="left:533.0px;top:452.7px;overflow:hidden" width="52.2" height="38.7" viewBox="0 0 52 39" preserveAspectRatio="none"><g filter="url(#bl)"><rect width="52" height="39" fill="#7b726b"/>
<rect x="0" y="0" width="16" height="5.4" fill="#5ba0e2"/><path d="M0 2.6 Q7 1 16 3.4 V5.4 H0 Z" fill="#9cc7f0"/>
<rect x="0" y="5.4" width="16" height="3" fill="#3a3632"/>
<rect x="16" y="0" width="36" height="17" fill="#2b2725"/><rect x="0" y="8.4" width="7.6" height="5" fill="#e9e6e1"/><rect x="7.6" y="8.4" width="9" height="6" fill="#4a3f38"/>
<rect x="0" y="13.4" width="11" height="5.6" fill="#b8623a"/><rect x="0" y="19" width="6" height="5" fill="#5a4a42"/>
<rect x="49.6" y="0" width="0.9" height="18" fill="#b9b9b9"/><rect x="50.5" y="0" width="1.5" height="20" fill="#d8d8d8"/>
<path d="M0 24 H52 V39 H0 Z" fill="#82786f"/><path d="M0 36 H52 V39 H0 Z" fill="#8e847b"/>
<path d="M2 30 Q20 38.6 40 33 L50 26 L50 24 L6 27 Z" fill="#2b2a2b"/>
<path d="M3 24.4 Q3.6 20 8 18 L17.6 14 L22.4 8.4 Q23.8 6.8 26.4 6.4 L38.6 5.4 Q42 5.2 44 7.2 L48.4 12.4 Q50.4 15.4 50.4 19.6 L50 24.6 Q49.6 26.8 47 27.6 L39.6 30.4 L35.6 34.6 L9 35 Q4.6 35 3.6 31.6 Z" fill="#f4f4f5"/>
<path d="M18.6 14 L23.8 8.8 Q24.8 7.8 26.8 7.6 L35.6 7 L33.8 13 L21.6 15 Z" fill="#1d2431"/>
<path d="M37 6.9 L40.6 6.7 Q42.6 6.8 43.8 8.2 L46.6 11.8 L36.4 12.8 Z" fill="#2a303c"/>
<path d="M8.6 19 L19.6 15.4 L31.4 14.8 L24 18.4 L11.6 21.2 Z" fill="#e4e5e8"/>
<path d="M19.6 20.6 L29.6 17.6 L30.4 20 L22.6 23 Z" fill="#77808c"/>
<path d="M4.2 23.6 L17.4 22.6 L18.4 30 L15.6 31.8 L6 31.8 L4.2 29.6 Z" fill="#18191c"/>
<rect x="6.6" y="26.2" width="7.4" height="2.8" fill="#2d5a3b"/>
<path d="M21 28.4 L27.6 27.6 L27.8 29.6 L21.4 30.4 Z" fill="#3a3c40"/>
<ellipse cx="33.4" cy="28.8" rx="4.8" ry="6" fill="#202124"/><ellipse cx="33.1" cy="28.8" rx="3.3" ry="4.4" fill="#b0b3b8"/><ellipse cx="33.1" cy="28.8" rx="1.1" ry="1.5" fill="#66696e"/>
<ellipse cx="48.4" cy="22.4" rx="1.9" ry="3.6" fill="#202124"/><ellipse cx="48.3" cy="22.4" rx="1.1" ry="2.4" fill="#9da0a5"/>
<path d="M38.6 24.6 L46.4 21.4 L46.6 22.4 L38.8 25.8 Z" fill="#26282c"/></g></svg>
<div class="a" style="left:589.2px;top:454.4px;width:51.8px;height:7.8px;box-sizing:border-box;border:0.8px solid #ec8468;border-radius:1.6px;background:#fff"></div>
<div class="t b" style="left:589.2px;top:452.5px;width:51.8px;text-align:center;font-size:6px;color:#e0583c">ASワンプラ</div>
<svg class="a" style="left:590.0px;top:465.4px" width="4" height="6" viewBox="0 0 10 15"><path d="M5 0 A5 5 0 0 1 10 5 Q10 8 5 15 Q0 8 0 5 A5 5 0 0 1 5 0 Z" fill="#444"/><circle cx="5" cy="5" r="2" fill="#fff"/></svg>
<div class="t" style="left:595.0px;top:463.5px;font-size:6.8px;color:#555">鹿児島県</div>
<div class="t" style="left:590.0px;top:475.2px;font-size:6.3px;color:#444">シトロエン</div>
<div class="t" style="left:590.0px;top:482.2px;font-size:6.6px;color:#444">シトロエンＤＳ４</div>
<svg class="a" style="left:684.0px;top:470.1px" width="3.1" height="4.6" viewBox="0 0 6 9"><path d="M0 0 L6 4.5 L0 9 Z" fill="#2455c0"/></svg>
</div>
</body>
</html>
